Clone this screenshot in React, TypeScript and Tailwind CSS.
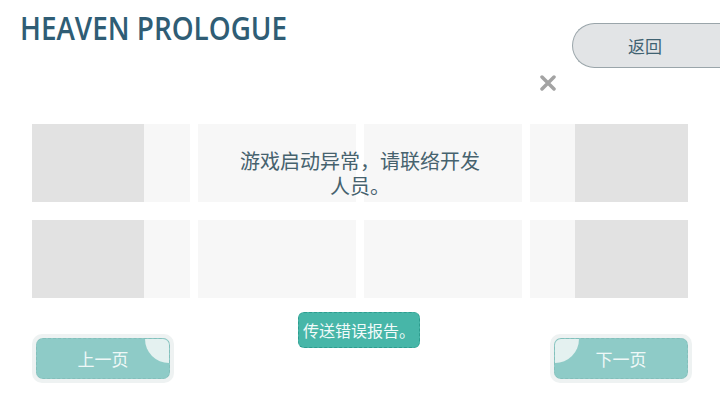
const slots = [
  { shade: "left" },
  { shade: "none" },
  { shade: "none" },
  { shade: "right" },
];

const SlotCard = ({ shade }: { shade: string }) => {
  return (
    <div className="flex h-[78px] bg-[#f7f7f7]">
      {shade === "left" && <div className="h-full w-[112px] bg-[#e2e2e2]" />}
      {shade === "right" && <div className="ml-auto h-full w-[113px] bg-[#e2e2e2]" />}
    </div>
  );
};

const PageButton = ({ label, side }: { label: string; side: "left" | "right" }) => {
  return (
    <div className="rounded-[10px] bg-[#eef2f2] p-[4px]">
      <div className="relative flex h-[41px] w-[134px] items-center justify-center overflow-hidden rounded-[7px] border border-dashed border-[#84bfbb] bg-[#8ecbc7]">
        <span
          className={`absolute top-[-24px] h-[48px] w-[48px] rounded-full bg-[#e4f1f0] ${
            side === "left" ? "right-[-24px]" : "left-[-24px]"
          }`}
        />
        <span className="relative text-[17px] text-[#eef8f7] [font-family:'Noto_Sans_CJK_SC',sans-serif]">
          {label}
        </span>
      </div>
    </div>
  );
};

export default function App() {
  return (
    <div className="relative flex h-[405px] w-[720px] flex-col overflow-hidden bg-white">
      <div className="flex items-start justify-between">
        <h1 className="ml-[20px] mt-[6px] origin-left scale-x-[0.87] whitespace-nowrap text-[32px] font-semibold leading-[44px] text-[#2f5d75] [font-family:'Open_Sans',sans-serif]">
          HEAVEN PROLOGUE
        </h1>
        <button className="mt-[23px] flex h-[45px] w-[148px] items-center rounded-l-[23px] border-[1.5px] border-r-0 border-[#9aa5aa] bg-[#e2e4e6] pl-[55px] text-[17px] text-[#3f6272] [font-family:'Noto_Sans_CJK_SC',sans-serif]">
          返回
        </button>
      </div>

      <div className="flex justify-end pr-[164px] pt-[7px]">
        <svg width="16" height="16" viewBox="0 0 16 16">
          <path d="M2 2 L14 14 M14 2 L2 14" stroke="#a3a3a3" strokeWidth="3.5" strokeLinecap="round" />
        </svg>
      </div>

      <div className="relative mx-[32px] mt-[33px] grid grid-cols-4 gap-x-[8px] gap-y-[18px]">
        {slots.map((s, i) => (
          <SlotCard key={`a${i}`} shade={s.shade} />
        ))}
        {slots.map((s, i) => (
          <SlotCard key={`b${i}`} shade={s.shade} />
        ))}
        <div className="absolute left-1/2 top-[24px] w-[250px] -translate-x-1/2 text-center text-[20px] leading-[25px] text-[#46626e] [font-family:'Noto_Sans_CJK_SC',sans-serif]">
          游戏启动异常，请联络开发人员。
        </div>
      </div>

      <div className="mt-[14px] flex justify-center">
        <button className="ml-[-2px] flex h-[36px] w-[122px] items-center justify-center rounded-[6px] border border-dashed border-[#2e9d8f] bg-[#47b6a8] text-[16px] text-[#f2fbfa] [font-family:'Noto_Sans_CJK_SC',sans-serif]">
          传送错误报告。
        </button>
      </div>

      <div className="mt-[-14px] flex justify-between pl-[32px] pr-[28px]">
        <PageButton label="上一页" side="left" />
        <PageButton label="下一页" side="right" />
      </div>
    </div>
  );
}
